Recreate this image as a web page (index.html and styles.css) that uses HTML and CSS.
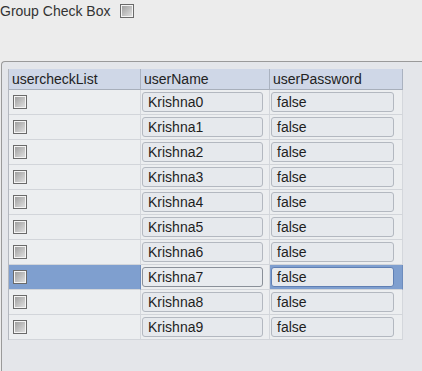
FILE: index.html
```html
<!DOCTYPE html>
<html lang="en">
<head>
    <meta charset="UTF-8">
    <title>Group Check Box</title>
    <link rel="stylesheet" href="styles.css">
</head>
<body>

<div class="top">
    <span class="label">Group Check Box</span>
    <span class="check"></span>
</div>

<div class="panel">
    <div class="grid">
        <div class="head">usercheckList</div>
        <div class="head">userName</div>
        <div class="head">userPassword</div>

        <div class="cell"><span class="check"></span></div>
        <div class="cell"><span class="field">Krishna0</span></div>
        <div class="cell"><span class="field">false</span></div>

        <div class="cell"><span class="check"></span></div>
        <div class="cell"><span class="field">Krishna1</span></div>
        <div class="cell"><span class="field">false</span></div>

        <div class="cell"><span class="check"></span></div>
        <div class="cell"><span class="field">Krishna2</span></div>
        <div class="cell"><span class="field">false</span></div>

        <div class="cell"><span class="check"></span></div>
        <div class="cell"><span class="field">Krishna3</span></div>
        <div class="cell"><span class="field">false</span></div>

        <div class="cell"><span class="check"></span></div>
        <div class="cell"><span class="field">Krishna4</span></div>
        <div class="cell"><span class="field">false</span></div>

        <div class="cell"><span class="check"></span></div>
        <div class="cell"><span class="field">Krishna5</span></div>
        <div class="cell"><span class="field">false</span></div>

        <div class="cell"><span class="check"></span></div>
        <div class="cell"><span class="field">Krishna6</span></div>
        <div class="cell"><span class="field">false</span></div>

        <div class="cell selected"><span class="check"></span></div>
        <div class="cell editing"><span class="field">Krishna7</span></div>
        <div class="cell selected"><span class="field">false</span></div>

        <div class="cell"><span class="check"></span></div>
        <div class="cell"><span class="field">Krishna8</span></div>
        <div class="cell"><span class="field">false</span></div>

        <div class="cell"><span class="check"></span></div>
        <div class="cell"><span class="field">Krishna9</span></div>
        <div class="cell"><span class="field">false</span></div>
    </div>
</div>

</body>
</html>
```

FILE: styles.css
```css
body {
    margin: 0;
    background: #ececec;
    color: #222;
    font-family: 'Liberation Sans', Arial, sans-serif;
    font-size: 14px;
    overflow: hidden;
}

.top {
    display: flex;
    align-items: center;
    height: 19px;
    padding-top: 1px;
}

.top .label {
    color: #333;
}

.top .check {
    margin-left: 9px;
}

.check {
    display: block;
    width: 12px;
    height: 12px;
    border: 1px solid #6a6a6a;
    background: linear-gradient(135deg, #9a9a9a, #e4e4e4);
    box-shadow: inset 0 0 0 1px #f4f4f4;
}

.panel {
    margin-top: 41px;
    margin-left: 1px;
    width: 440px;
    height: 320px;
    border-top: 1px solid #9a9a9a;
    border-left: 1px solid #9a9a9a;
    border-top-left-radius: 4px;
    background: #e4e6ea;
    padding: 7px 0 0 6px;
    box-sizing: border-box;
}

.grid {
    display: grid;
    grid-template-columns: 132px 129px 133px;
    grid-auto-rows: 25px;
    grid-template-rows: 21px;
    width: 394px;
    background: #eceef0;
    border-left: 1px solid #b4b8bf;
}

.head {
    background: #cfd7e7;
    border-right: 1px solid #aab2c0;
    border-bottom: 1px solid #a8afbb;
    padding-left: 3px;
    line-height: 20px;
    color: #222;
}

.cell {
    display: flex;
    align-items: center;
    border-right: 1px solid #d4d7dc;
    border-bottom: 1px solid #d2d5da;
    padding: 0 6px 0 1px;
}

.cell:nth-child(3n) {
    padding-right: 8px;
}

.cell .check {
    margin-left: 3px;
}

.field {
    flex: 1;
    height: 18px;
    line-height: 18px;
    padding-left: 5px;
    background: #e6e9ed;
    border: 1px solid #b3b8c0;
    border-radius: 3px;
    color: #1e1e1e;
}

.selected {
    background: #7f9fcf;
    border-right-color: #6d8cbd;
}

.selected .field {
    border-color: #5f7fb4;
}

.editing .field {
    border-color: #8a9099;
    background: #e8ebef;
}
```
